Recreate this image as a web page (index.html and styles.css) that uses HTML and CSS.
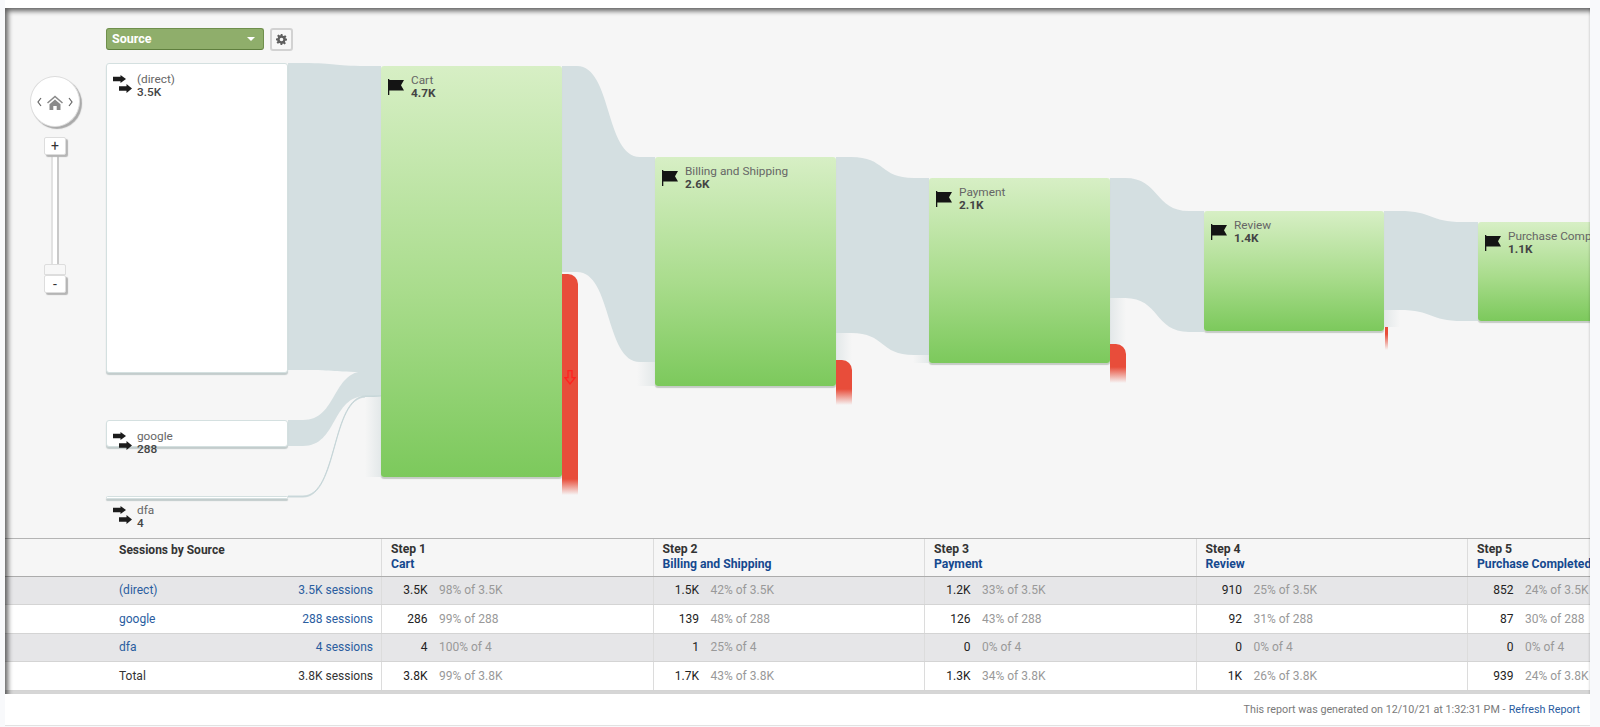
FILE: index.html
```html
<!DOCTYPE html>
<html lang="en">
<head>
<meta charset="utf-8">
<title>Funnel visualization</title>
<link rel="stylesheet" href="styles.css">
</head>
<body>
<svg class="defs" width="0" height="0" aria-hidden="true">
  <defs>
    <symbol id="flag" viewBox="0 0 16 16"><path d="M0 0h1.300v16H0zM1.300 1H16l-3 5.200L16 11.600H1.300z"/></symbol>
    <symbol id="arrows" viewBox="0 0 19 18"><path d="M0 1.800h7.500V0L13 4 7.500 8V6.200H0zM6 11.300h7.500V9l5.500 4.500L13.500 18v-2.300H6z"/></symbol>
    <linearGradient id="fade-l"><stop offset="0" stop-color="#f6f6f6"/><stop offset="1" stop-color="#e3e8e9"/></linearGradient>
    <linearGradient id="fade-r"><stop offset="0" stop-color="#e3e8e9"/><stop offset="1" stop-color="#f6f6f6"/></linearGradient>
  </defs>
</svg>
<main class="page">
  <section class="panel">
    <div class="canvas">
      <svg class="flows" width="1585" height="530" viewBox="0 0 1585 530" aria-hidden="true">
        <path d="M283 55L298 55C333 55 326 58 361 58L376 58L376 364L361 364C326 364 333 362 298 362L283 362Z"/>
        <path d="M283 412L298 412C333 412 326 363 361 363L376 363L376 388L361 388C326 388 333 438 298 438L283 438Z"/>
        <path class="thin" d="M283 488L298 488C333 488 326 388 361 388L376 388L361 389C326 389 333 489 298 489L283 489Z"/>
        <path d="M557 58L572 58C607 58 600 149 635 149L650 149L650 354L635 354C600 354 607 264 572 264L557 264Z"/>
        <path d="M831 149L846 149C881 149 874 170 909 170L924 170L924 347L909 347C874 347 881 325 846 325L831 325Z"/>
        <path d="M1105 170L1120 170C1155 170 1149 203 1184 203L1199 203L1199 324L1184 324C1149 324 1155 290 1120 290L1105 290Z"/>
        <path d="M1379 203L1394 203C1429 203 1423 214 1458 214L1473 214L1473 313L1458 313C1423 313 1429 302 1394 302L1379 302Z"/>
        <rect x="360" y="389" width="16" height="80" fill="url(#fade-l)"/>
        <rect x="632" y="354" width="18" height="24" fill="url(#fade-l)"/>
        <rect x="908" y="347" width="16" height="8" fill="url(#fade-l)"/>
        <rect x="831" y="325" width="16" height="27" fill="url(#fade-r)"/>
        <rect x="1105" y="290" width="16" height="46" fill="url(#fade-r)"/>
        <rect x="1379" y="302" width="16" height="17" fill="url(#fade-r)"/>
      </svg>

      <div class="toolbar">
        <div class="select"><span>Source</span><i class="caret"></i></div>
        <div class="gear">
          <svg width="11" height="11" viewBox="0 0 24 24" aria-hidden="true"><path fill="#5f5f5f" fill-rule="evenodd" d="M10 0h4l.7 3.600 2.300 1 3-2.100 2.800 2.800-2.100 3 1 2.300L24 10v4l-3.600.7-1 2.300 2.100 3-2.800 2.800-3-2.100-2.300 1L14 24h-4l-.7-3.600-2.300-1-3 2.100-2.800-2.800 2.100-3-1-2.300L0 14v-4l3.600-.7 1-2.300-2.100-3L5.300 1.200l3 2.100 2.300-1zM12 8a4 4 0 1 0 0 8 4 4 0 0 0 0-8z"/></svg>
        </div>
      </div>

      <div class="zoom">
        <div class="pan">
          <svg width="36" height="16" viewBox="0 0 36 16" aria-hidden="true">
            <path d="M4 4L1 8l3 4M32 4l3 4-3 4" fill="none" stroke="#666" stroke-width="1.200"/>
            <path fill="#8a8a8a" d="M18 1.500L10 8.500l1 1 7-6 7 6 1-1zM12.500 10.200L18 5.500l5.500 4.700V16h-3.800v-4h-3.400v4h-3.800z"/>
          </svg>
        </div>
        <div class="zoom-btn">+</div>
        <div class="track"></div>
        <div class="handle"></div>
        <div class="zoom-btn zoom-minus">-</div>
      </div>

      <div class="node source n-direct"><svg class="ico-arrows"><use href="#arrows"/></svg><div class="lab"><span>(direct)</span><b>3.5K</b></div></div>
      <div class="node source n-google"><svg class="ico-arrows"><use href="#arrows"/></svg><div class="lab"><span>google</span><b>288</b></div></div>
      <div class="node source n-dfa"><svg class="ico-arrows"><use href="#arrows"/></svg><div class="lab"><span>dfa</span><b>4</b></div></div>

      <div class="node step n-cart"><svg class="ico-flag"><use href="#flag"/></svg><div class="lab"><span>Cart</span><b>4.7K</b></div></div>
      <div class="node step n-billing"><svg class="ico-flag"><use href="#flag"/></svg><div class="lab"><span>Billing and Shipping</span><b>2.6K</b></div></div>
      <div class="node step n-payment"><svg class="ico-flag"><use href="#flag"/></svg><div class="lab"><span>Payment</span><b>2.1K</b></div></div>
      <div class="node step n-review"><svg class="ico-flag"><use href="#flag"/></svg><div class="lab"><span>Review</span><b>1.4K</b></div></div>
      <div class="node step n-purchase"><svg class="ico-flag"><use href="#flag"/></svg><div class="lab"><span>Purchase Completed</span><b>1.1K</b></div></div>

      <div class="exit e1">
        <svg class="exit-arrow" width="12" height="15" viewBox="0 0 12 15" aria-hidden="true"><path d="M4 .7h4v7h3L6 14 1 7.700h3z" fill="none" stroke="#ff2320" stroke-width="1.300"/></svg>
      </div>
      <div class="exit e2"></div>
      <div class="exit e3"></div>
      <div class="exit e4"></div>
    </div>

    <div class="table">
      <div class="row head">
        <div class="first"><b class="head-title">Sessions by Source</b></div>
        <div class="hcell"><b>Step 1</b><a>Cart</a></div>
        <div class="hcell"><b>Step 2</b><a>Billing and Shipping</a></div>
        <div class="hcell"><b>Step 3</b><a>Payment</a></div>
        <div class="hcell"><b>Step 4</b><a>Review</a></div>
        <div class="hcell"><b>Step 5</b><a>Purchase Completed</a></div>
      </div>
      <div class="row shade">
        <div class="first link"><span>(direct)</span><span>3.5K sessions</span></div>
        <div class="cell"><span class="num">3.5K</span><span class="pct">98% of 3.5K</span></div>
        <div class="cell"><span class="num">1.5K</span><span class="pct">42% of 3.5K</span></div>
        <div class="cell"><span class="num">1.2K</span><span class="pct">33% of 3.5K</span></div>
        <div class="cell"><span class="num">910</span><span class="pct">25% of 3.5K</span></div>
        <div class="cell"><span class="num">852</span><span class="pct">24% of 3.5K</span></div>
      </div>
      <div class="row">
        <div class="first link"><span>google</span><span>288 sessions</span></div>
        <div class="cell"><span class="num">286</span><span class="pct">99% of 288</span></div>
        <div class="cell"><span class="num">139</span><span class="pct">48% of 288</span></div>
        <div class="cell"><span class="num">126</span><span class="pct">43% of 288</span></div>
        <div class="cell"><span class="num">92</span><span class="pct">31% of 288</span></div>
        <div class="cell"><span class="num">87</span><span class="pct">30% of 288</span></div>
      </div>
      <div class="row shade">
        <div class="first link"><span>dfa</span><span>4 sessions</span></div>
        <div class="cell"><span class="num">4</span><span class="pct">100% of 4</span></div>
        <div class="cell"><span class="num">1</span><span class="pct">25% of 4</span></div>
        <div class="cell"><span class="num">0</span><span class="pct">0% of 4</span></div>
        <div class="cell"><span class="num">0</span><span class="pct">0% of 4</span></div>
        <div class="cell"><span class="num">0</span><span class="pct">0% of 4</span></div>
      </div>
      <div class="row">
        <div class="first"><span>Total</span><span>3.8K sessions</span></div>
        <div class="cell"><span class="num">3.8K</span><span class="pct">99% of 3.8K</span></div>
        <div class="cell"><span class="num">1.7K</span><span class="pct">43% of 3.8K</span></div>
        <div class="cell"><span class="num">1.3K</span><span class="pct">34% of 3.8K</span></div>
        <div class="cell"><span class="num">1K</span><span class="pct">26% of 3.8K</span></div>
        <div class="cell"><span class="num">939</span><span class="pct">24% of 3.8K</span></div>
      </div>
    </div>
  </section>
  <footer class="foot">This report was generated on 12/10/21 at 1:32:31 PM - <a>Refresh Report</a></footer>
</main>
</body>
</html>
```

FILE: styles.css
```css
* { box-sizing: border-box; }
html, body { margin: 0; height: 727px; overflow: hidden; }
body { background: #f8f9fb; font-family: Roboto, "Liberation Sans", sans-serif; color: #222; }
.defs { position: absolute; }
.page { margin-left: 5px; width: 1585px; height: 726px; padding-top: 8px; background: #fff; border-bottom: 1px solid #e2e2e2; display: flex; flex-direction: column; }

.panel { position: relative; height: 686px; background: #f6f6f6; overflow: hidden; flex: none; }
.panel::after { content: ""; position: absolute; inset: 0; pointer-events: none; box-shadow: inset 5px 5px 5px -2px rgba(0,0,0,.6), inset -2px 0 2px -1px rgba(0,0,0,.12); }

.canvas { position: relative; height: 530px; padding: 20px 0 0 101px; }
.flows { position: absolute; left: 0; top: 0; fill: #d4dfe1; }
.flows .thin { stroke: #c3d3d5; stroke-width: .8; }

.toolbar { position: relative; display: flex; gap: 6px; }
.select { width: 158px; height: 22px; padding: 0 8px 1px 5px; display: flex; align-items: center; justify-content: space-between; background: #8fae6b; border: 1px solid #6f8f4c; border-bottom-color: #5f7f3e; border-radius: 3px; color: #fff; font-size: 12.500px; font-weight: 700; }
.caret { width: 0; height: 0; border: 4px solid transparent; border-top: 4px solid #fff; border-bottom: 0; border-left-width: 4.500px; border-right-width: 4.500px; }
.gear { width: 23px; height: 23px; display: flex; align-items: center; justify-content: center; border: 2px solid #d2d2d2; border-radius: 3px; background: #f7f7f7; }

.zoom { position: absolute; left: 24px; top: 68px; width: 52px; display: flex; flex-direction: column; align-items: center; }
.pan { width: 50px; height: 51px; margin-bottom: 10px; display: flex; align-items: center; justify-content: center; background: #fff; border: 1px solid #dcdcdc; border-radius: 50%; box-shadow: 2px 2px 1px #a9a9a9; }
.zoom-btn { position: relative; width: 22px; height: 18px; display: flex; align-items: center; justify-content: center; background: #fff; border: 1px solid #ddd; border-radius: 2px; box-shadow: 2px 2px 1px #b5b5b5; font-size: 14px; line-height: 1; color: #333; }
.track { width: 8px; height: 109px; background: #fff; border: solid #c9c9c9; border-width: 0 2px 0 2px; border-left-color: #e2e2e2; }
.handle { position: relative; width: 22px; height: 11px; background: #f7f7f7; border: 1px solid #ddd; border-radius: 2px 2px 0 0; }

.node { position: absolute; width: 181px; padding: 0 0 0 7px; display: flex; align-items: flex-start; border-radius: 3px; font-size: 11.800px; }
.source { width: 182px; background: #fff; border: 1px solid #d4e0e0; box-shadow: 0 2px 1px #c3cccc; }
.step { background: linear-gradient(#d7efc5, #a9dc8c 55%, #7cc95c); box-shadow: 0 2px 1px #c5cbc5; }
.ico-arrows { width: 19px; height: 18px; flex: none; margin: 11px 0 0 -1px; fill: #1c1c1c; }
.ico-flag { width: 16px; height: 16px; flex: none; margin-top: 13px; fill: #141414; }
.lab { margin: 8px 0 0 7px; line-height: 12.500px; white-space: nowrap; }
.source .lab { margin: 9px 0 0 5px; }
.n-dfa .ico-arrows { margin-top: 9px; }
.source.n-dfa .lab { margin-top: 7px; }
.lab span, .lab b { display: block; }
.lab span { color: #666; }
.lab b { color: #444; font-weight: 700; }
.source .lab b { font-weight: 500; }
.n-direct { left: 101px; top: 55px; height: 310px; }
.n-google { left: 101px; top: 412px; height: 27px; }
.n-dfa { left: 101px; top: 488px; height: 3px; }
.n-cart { left: 376px; top: 58px; height: 411px; }
.n-billing { left: 650px; top: 149px; height: 229px; }
.n-payment { left: 924px; top: 170px; height: 185px; }
.n-review { left: 1199px; top: 203px; height: 120px; width: 180px; }
.n-purchase { left: 1473px; top: 214px; height: 99px; }

.exit { position: absolute; width: 16px; background: linear-gradient(to bottom, #e84d3a calc(100% - 16px), rgba(232,77,58,0)); border-radius: 0 10px 0 0; }
.e1 { left: 557px; top: 266px; height: 221px; }
.e2 { left: 831px; top: 352px; height: 45px; }
.e3 { left: 1105px; top: 336px; height: 39px; }
.e4 { left: 1380px; top: 319px; height: 23px; width: 3px; border-radius: 0; }
.exit-arrow { position: absolute; left: 2px; top: 96px; }

.table { font-size: 12px; border-bottom: 3px solid #d6d6d6; }
.row { display: grid; grid-template-columns: 376px repeat(5, 271.500px); height: 28.500px; border-bottom: 1px solid #d4d4d4; background: #fff; }
.shade { background: #e6e6e8; }
.head { height: 38.500px; background: #f6f6f6; border-top: 1px solid #b4b4b4; border-bottom: 1px solid #acacac; }
.first { padding: 0 8px 0 114px; display: flex; align-items: center; justify-content: space-between; color: #333; }
.head .first { align-items: flex-start; padding-top: 4px; }
.head-title { font-size: 12px; color: #333; font-weight: 700; }
.link { color: #2a5d9f; }
.hcell { padding: 3px 0 0 9px; border-left: 1px solid #dcdcdc; font-size: 12.200px; line-height: 15px; white-space: nowrap; }
.hcell b, .hcell a { display: block; font-weight: 700; }
.hcell b { color: #333; }
.hcell a { color: #15498f; }
.cell { display: flex; align-items: center; gap: 11.500px; border-left: 1px solid #dcdcdc; white-space: nowrap; }
.num { width: 45.500px; text-align: right; color: #222; }
.pct { color: #999; }

.foot { flex: 1; display: flex; justify-content: flex-end; align-items: center; gap: .3em; padding: 0 10px 0 0; font-size: 10.750px; color: #7a7a7a; }
.foot a { color: #2a5d9f; }
```
